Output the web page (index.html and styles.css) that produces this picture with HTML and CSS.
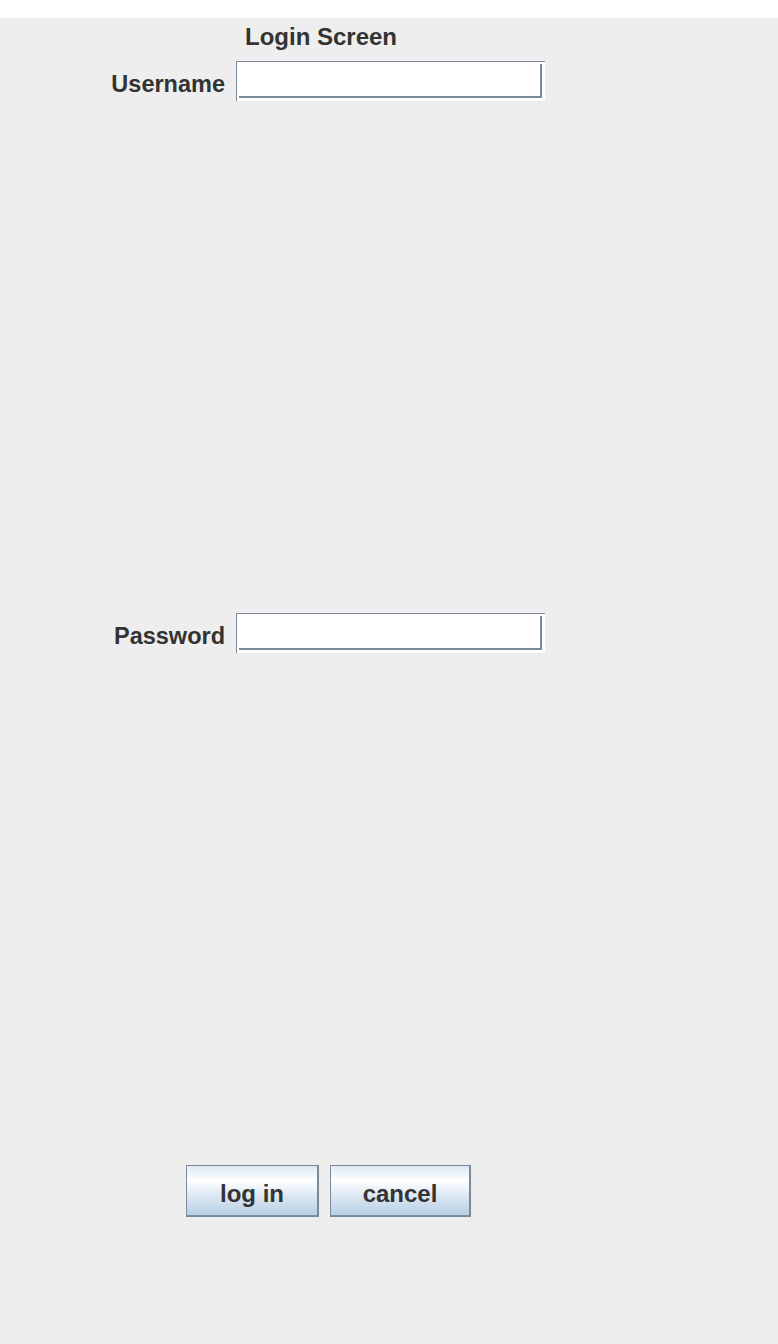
FILE: index.html
```html
<!DOCTYPE html>
<html>
<head>
<meta charset="utf-8">
<title>Login Screen</title>
<link rel="stylesheet" href="styles.css">
</head>
<body>
<div class="topbar"></div>
<main class="panel">
  <div class="title">Login Screen</div>
  <div class="row row-user">
    <label class="label">Username</label>
    <div class="field"><div class="field-inner"></div></div>
  </div>
  <div class="row row-pass">
    <label class="label">Password</label>
    <div class="field"><div class="field-inner"></div></div>
  </div>
  <div class="buttons">
    <button class="btn btn-login">log in</button>
    <button class="btn btn-cancel">cancel</button>
  </div>
</main>
</body>
</html>
```
FILE: styles.css
```css
html, body {
  margin: 0;
  padding: 0;
  background: #ffffff;
}
body {
  font-family: "Liberation Sans", Arial, sans-serif;
  font-weight: bold;
  color: #333333;
}
.topbar {
  height: 18px;
  background: #ffffff;
}
.panel {
  background: #eeeeee;
  height: 1326px;
  padding-top: 5px;
  box-sizing: border-box;
}
.title {
  font-size: 24px;
  line-height: 28px;
  margin-left: 245px;
}
.row {
  display: grid;
  grid-template-columns: 225px 309px;
  column-gap: 11px;
  align-items: center;
  height: 40px;
}
.row-user {
  margin-top: 10px;
}
.row-pass {
  margin-top: 512px;
}
.label {
  font-size: 23.5px;
  line-height: 28px;
  padding-top: 5px;
  text-align: right;
}
.field {
  height: 40px;
  box-sizing: border-box;
  background: #ffffff;
  border-top: 1px solid #7a8a99;
  border-left: 1px solid #7a8a99;
  padding: 2px 3px 3px 2px;
}
.field-inner {
  height: 100%;
  box-sizing: border-box;
  border-right: 2px solid #7a8a99;
  border-bottom: 2px solid #7a8a99;
}
.buttons {
  display: flex;
  gap: 11px;
  margin-top: 512px;
  margin-left: 186px;
}
.btn {
  height: 52px;
  box-sizing: border-box;
  margin: 0;
  padding: 6px 0 0 0;
  font-family: "Liberation Sans", Arial, sans-serif;
  font-weight: bold;
  font-size: 24px;
  color: #333333;
  border-style: solid;
  border-color: #7a8a99;
  border-width: 1px 2px 2px 1px;
  box-shadow: 1px 1px 0 #e4ecf4;
  background: linear-gradient(to bottom, #dde8f3 0%, #ffffff 30%, #dde8f3 60%, #b8cfe5 100%);
}
.btn-login {
  width: 133px;
}
.btn-cancel {
  width: 141px;
}
```
